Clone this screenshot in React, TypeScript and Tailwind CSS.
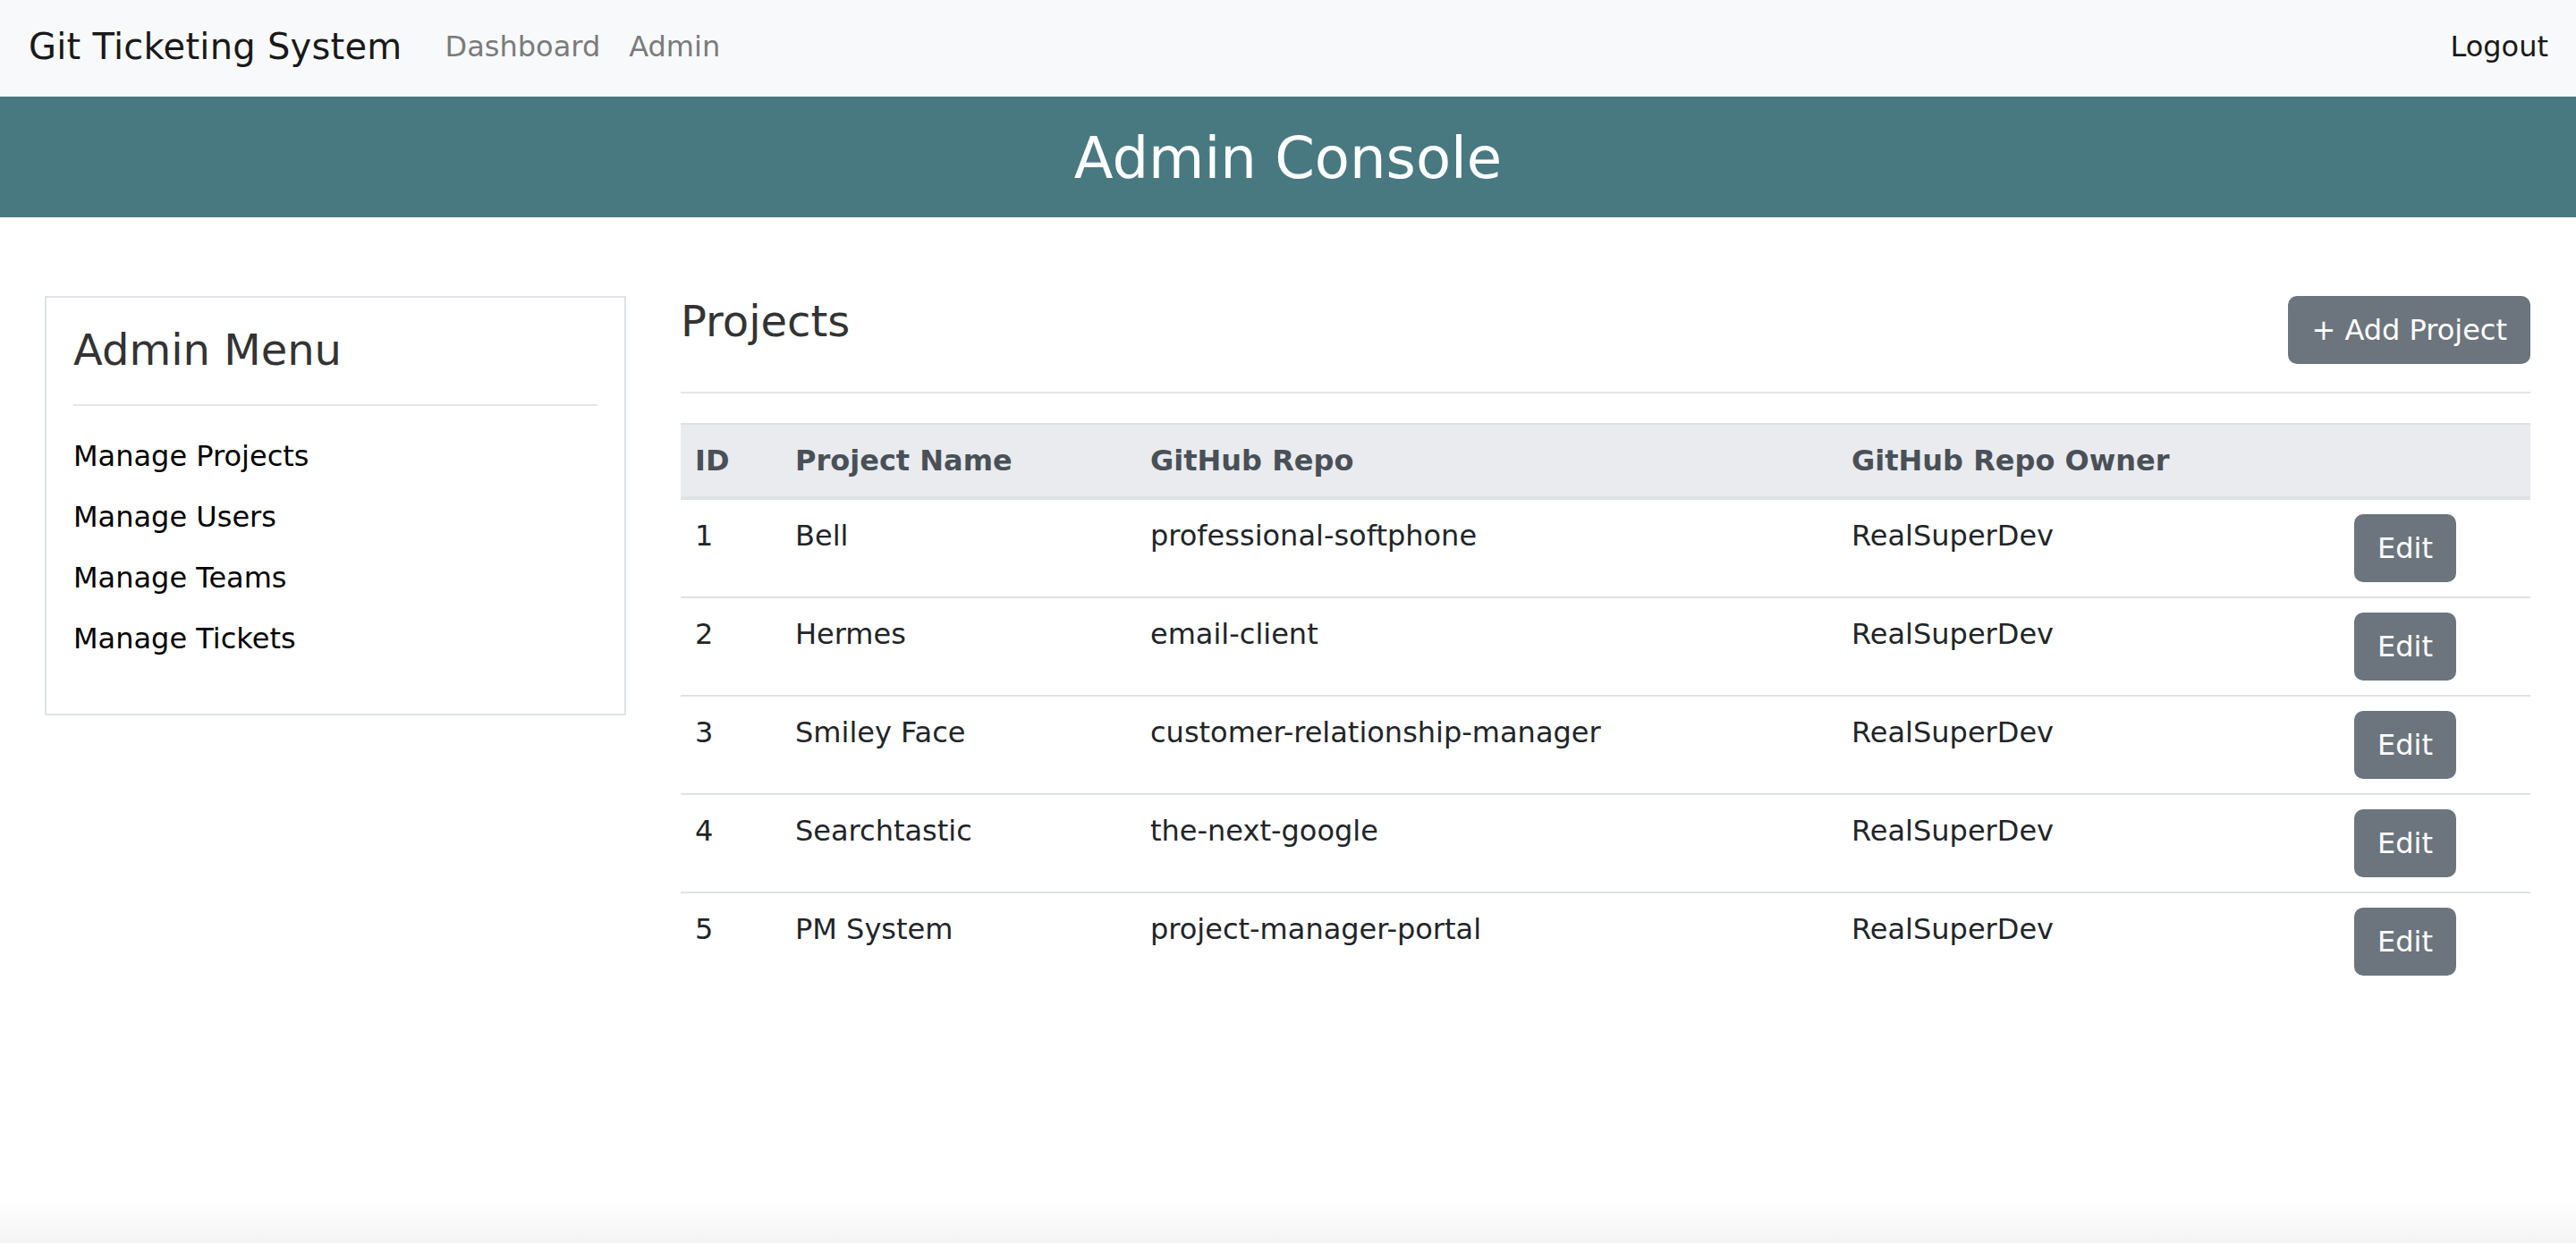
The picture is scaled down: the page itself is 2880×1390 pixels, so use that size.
import React from "react";

const projects = [
  { id: 1, name: "Bell", repo: "professional-softphone", owner: "RealSuperDev" },
  { id: 2, name: "Hermes", repo: "email-client", owner: "RealSuperDev" },
  { id: 3, name: "Smiley Face", repo: "customer-relationship-manager", owner: "RealSuperDev" },
  { id: 4, name: "Searchtastic", repo: "the-next-google", owner: "RealSuperDev" },
  { id: 5, name: "PM System", repo: "project-manager-portal", owner: "RealSuperDev" },
];

const menu = ["Manage Projects", "Manage Users", "Manage Teams", "Manage Tickets"];

export default function App() {
  return (
    <div className="flex h-[1390px] flex-col overflow-hidden bg-white font-['DejaVu_Sans',sans-serif] text-[32px] leading-[48px] text-[#212529]">
      {/* Navbar */}
      <nav className="flex h-[108px] shrink-0 items-center bg-[#f8f9fa] pb-[4px] pl-[32px] pr-[31px]">
        <a className="mr-[32px] text-[40px] leading-[60px] tracking-[0.25px] text-[#191919]">Git Ticketing System</a>
        <div className="flex">
          <a className="px-[16px] text-[#7a7b7c]">Dashboard</a>
          <a className="px-[16px] text-[#7a7b7c]">Admin</a>
        </div>
        <div className="ml-auto">
          <a className="text-[#191919]">Logout</a>
        </div>
      </nav>

      {/* Banner */}
      <header className="h-[135px] shrink-0 bg-[#497980] pt-[31px] text-center">
        <h2 className="text-[64px] leading-[1.2] font-normal text-white">Admin Console</h2>
      </header>

      {/* Content */}
      <main className="flex flex-1 gap-[61px] pl-[50px] pr-[51px] pt-[88px]">
        <aside className="w-[650px] shrink-0 self-start border-2 border-[#dfe2e6] p-[30px]">
          <h4 className="text-[48px] leading-[1.2] text-[#333333]">Admin Menu</h4>
          <hr className="mt-[31px] border-t-2 border-[#e4e6e8]" />
          <ul className="mt-[32px] mb-[30px] flex flex-col gap-[20px]">
            {menu.map((m) => (
              <li key={m}>
                <a className="text-black">{m}</a>
              </li>
            ))}
          </ul>
        </aside>

        <section className="min-w-0 flex-1">
          <div className="flex items-start justify-between border-b-2 border-[#e4e6e8] pb-[31px]">
            <h3 className="text-[48px] leading-[1.2] text-[#333333]">Projects</h3>
            <button className="rounded-[10px] border-2 border-[#6c757d] bg-[#6c757d] px-[24px] py-[12px] text-[32px] leading-[48px] text-white">
              + Add Project
            </button>
          </div>

          <table className="mt-[33px] w-full table-fixed border-collapse text-left">
            <colgroup>
              <col className="w-[112px]" />
              <col className="w-[397px]" />
              <col className="w-[784px]" />
              <col className="w-[562px]" />
              <col className="w-[213px]" />
            </colgroup>
            <thead>
              <tr className="bg-[#e9ebee]">
                <th className="border-t-2 border-b-4 border-[#dee1e5] px-[16px] py-[16px] align-top font-bold text-[#495057]">ID</th>
                <th className="border-t-2 border-b-4 border-[#dee1e5] px-[16px] py-[16px] align-top font-bold text-[#495057]">Project Name</th>
                <th className="border-t-2 border-b-4 border-[#dee1e5] px-[16px] py-[16px] align-top font-bold text-[#495057]">GitHub Repo</th>
                <th className="border-t-2 border-b-4 border-[#dee1e5] px-[16px] py-[16px] align-top font-bold text-[#495057]">GitHub Repo Owner</th>
                <th className="border-t-2 border-b-4 border-[#dee1e5] px-[16px] py-[16px] align-top"></th>
              </tr>
            </thead>
            <tbody>
              {projects.map((p, i) => {
                const b = i < projects.length - 1 ? "border-b-2 border-[#dee1e5]" : "";
                return (
                  <tr key={p.id}>
                    <td className={`${b} px-[16px] py-[16px] align-top`}>{p.id}</td>
                    <td className={`${b} px-[16px] py-[16px] align-top`}>{p.name}</td>
                    <td className={`${b} px-[16px] py-[16px] align-top`}>{p.repo}</td>
                    <td className={`${b} px-[16px] py-[16px] align-top`}>{p.owner}</td>
                    <td className={`${b} px-[16px] py-[16px] align-top`}>
                      <button className="rounded-[10px] border-2 border-[#6c757d] bg-[#6c757d] px-[24px] py-[12px] text-[32px] leading-[48px] text-white">
                        Edit
                      </button>
                    </td>
                  </tr>
                );
              })}
            </tbody>
          </table>
        </section>
      </main>

      <div className="h-[48px] shrink-0 bg-gradient-to-b from-white to-[#f4f4f4]" />
    </div>
  );
}
